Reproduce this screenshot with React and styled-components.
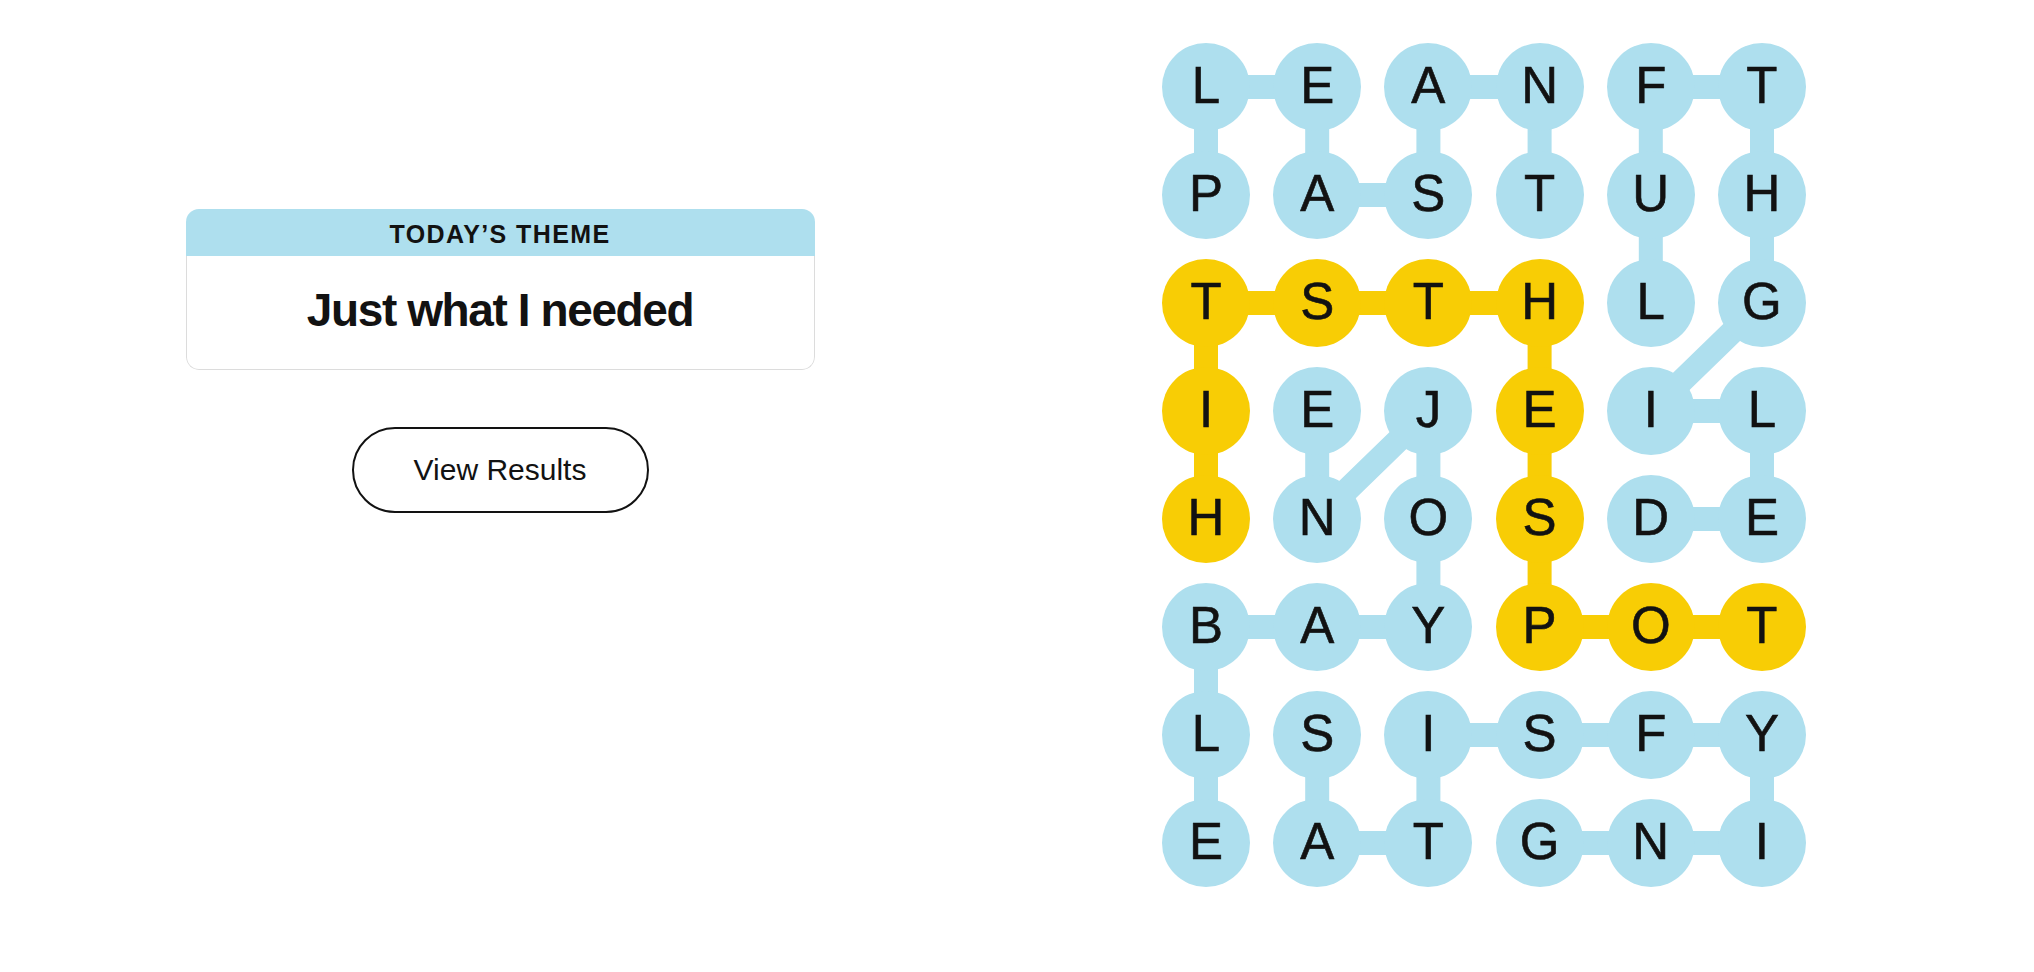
import React from "react";
import styled, { createGlobalStyle } from "styled-components";

const BLUE = "#aedfee";
const YELLOW = "#f8cd05";
const INK = "#121212";

const CELL = 88;
const COL_STEP = 111.2;
const ROW_STEP = 108;

const LETTERS = [
  "LEANFT",
  "PASTUH",
  "TSTHLG",
  "IEJEIL",
  "HNOSDE",
  "BAYPOT",
  "LSISFY",
  "EATGNI",
];

const WORDS = [
  { spangram: false, cells: [[1, 0], [0, 0], [0, 1], [1, 1], [1, 2], [0, 2], [0, 3], [1, 3]] },
  { spangram: false, cells: [[4, 4], [4, 5], [3, 5], [3, 4], [2, 5], [1, 5], [0, 5], [0, 4], [1, 4], [2, 4]] },
  { spangram: false, cells: [[3, 1], [4, 1], [3, 2], [4, 2], [5, 2], [5, 1], [5, 0], [6, 0], [7, 0]] },
  { spangram: false, cells: [[6, 1], [7, 1], [7, 2], [6, 2], [6, 3], [6, 4], [6, 5], [7, 5], [7, 4], [7, 3]] },
  { spangram: true, cells: [[4, 0], [3, 0], [2, 0], [2, 1], [2, 2], [2, 3], [3, 3], [4, 3], [5, 3], [5, 4], [5, 5]] },
];

const spangramCells = new Set(
  WORDS.filter((w) => w.spangram).flatMap((w) => w.cells.map(([r, c]) => `${r},${c}`))
);

const GlobalStyle = createGlobalStyle`
  html, body {
    margin: 0;
    padding: 0;
    background: #ffffff;
  }
  body {
    font-family: "Liberation Sans", Arial, sans-serif;
    color: ${INK};
  }
`;

const Page = styled.main`
  display: flex;
  align-items: flex-start;
  width: 2034px;
  height: 972px;
  padding-top: 43px;
  box-sizing: border-box;
  overflow: hidden;
`;

const SidePanel = styled.section`
  width: 1000px;
  flex: none;
  display: flex;
  flex-direction: column;
  align-items: center;
  padding-top: 166px;
`;

const ThemeCard = styled.div`
  width: 629px;
  border-radius: 13px;
  overflow: hidden;
  display: flex;
  flex-direction: column;
`;

const ThemeHeader = styled.div`
  height: 47px;
  box-sizing: border-box;
  padding-top: 3px;
  background: ${BLUE};
  display: flex;
  align-items: center;
  justify-content: center;
  font-family: "Liberation Sans", Arial, sans-serif;
  font-weight: 700;
  font-size: 25px;
  letter-spacing: 1.4px;
  text-transform: uppercase;
  color: ${INK};
`;

const ThemeBody = styled.div`
  height: 114px;
  box-sizing: border-box;
  border: 1px solid #dcdcdc;
  border-top: none;
  border-radius: 0 0 13px 13px;
  display: flex;
  align-items: center;
  justify-content: center;
  padding-bottom: 6px;
`;

const ThemeTitle = styled.h1`
  margin: 0;
  font-family: "Liberation Sans", Arial, sans-serif;
  font-weight: 700;
  font-size: 46px;
  letter-spacing: -1.4px;
  color: ${INK};
`;

const ResultsButton = styled.button`
  margin-top: 57px;
  width: 297px;
  height: 86px;
  border: 2px solid ${INK};
  border-radius: 43px;
  background: #ffffff;
  font-family: "Liberation Sans", Arial, sans-serif;
  font-size: 30px;
  color: ${INK};
  cursor: pointer;
`;

const Board = styled.div`
  position: relative;
  margin-left: 162px;
  width: ${CELL * 6 + (COL_STEP - CELL) * 5}px;
  height: ${CELL * 8 + (ROW_STEP - CELL) * 7}px;
`;

const Links = styled.svg`
  position: absolute;
  inset: 0;
  width: 100%;
  height: 100%;
`;

const LetterGrid = styled.div`
  position: relative;
  display: grid;
  grid-template-columns: repeat(6, ${CELL}px);
  grid-auto-rows: ${CELL}px;
  column-gap: ${COL_STEP - CELL}px;
  row-gap: ${ROW_STEP - CELL}px;
`;

const Letter = styled.button`
  width: ${CELL}px;
  height: ${CELL}px;
  padding: 0 0 3px;
  border: none;
  border-radius: 50%;
  background: ${(p) => (p.$spangram ? YELLOW : BLUE)};
  display: flex;
  align-items: center;
  justify-content: center;
  font-family: "Liberation Sans", Arial, sans-serif;
  font-size: 51px;
  font-weight: 400;
  color: ${INK};
  -webkit-text-stroke: 0.6px ${INK};
  cursor: pointer;
`;

const center = ([r, c]) => [c * COL_STEP + CELL / 2, r * ROW_STEP + CELL / 2];

export default function App() {
  return (
    <>
      <GlobalStyle />
      <Page>
        <SidePanel>
          <ThemeCard>
            <ThemeHeader>Today’s Theme</ThemeHeader>
            <ThemeBody>
              <ThemeTitle>Just what I needed</ThemeTitle>
            </ThemeBody>
          </ThemeCard>
          <ResultsButton>View Results</ResultsButton>
        </SidePanel>

        <Board>
          <Links aria-hidden="true">
            {WORDS.map((word, i) => (
              <polyline
                key={i}
                points={word.cells.map((cell) => center(cell).join(",")).join(" ")}
                fill="none"
                stroke={word.spangram ? YELLOW : BLUE}
                strokeWidth="24"
                strokeLinejoin="round"
              />
            ))}
          </Links>
          <LetterGrid>
            {LETTERS.map((row, r) =>
              row.split("").map((ch, c) => (
                <Letter key={`${r}-${c}`} $spangram={spangramCells.has(`${r},${c}`)}>
                  {ch}
                </Letter>
              ))
            )}
          </LetterGrid>
        </Board>
      </Page>
    </>
  );
}
